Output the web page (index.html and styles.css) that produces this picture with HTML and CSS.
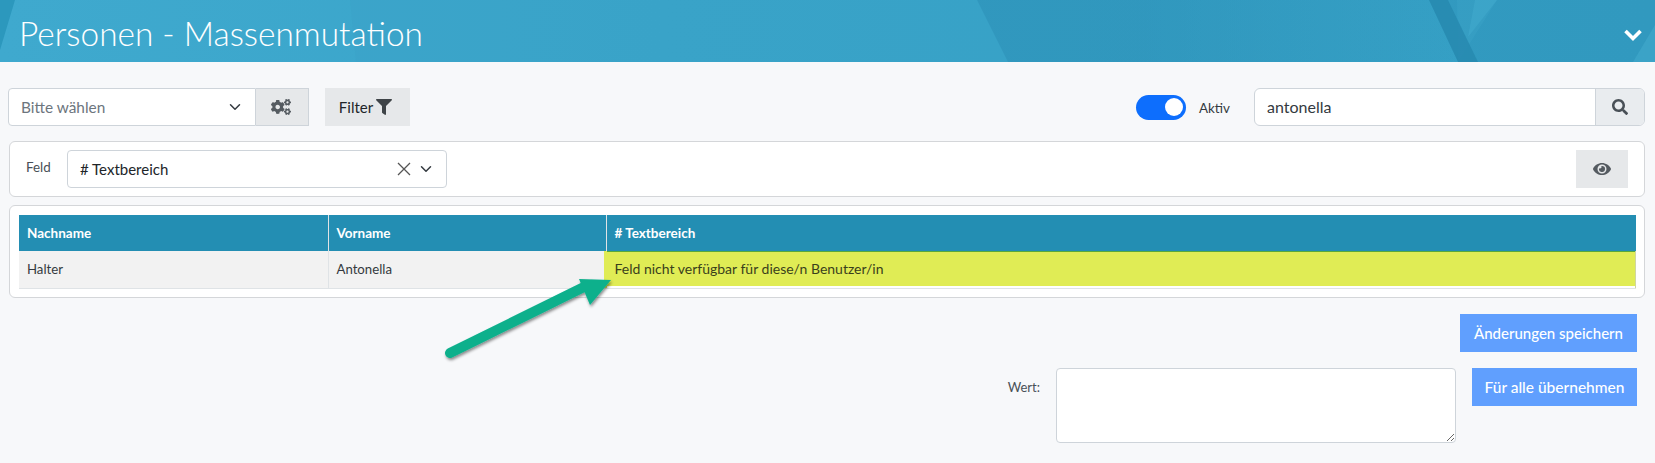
FILE: index.html
```html
<!DOCTYPE html>
<html lang="de">
<head>
<meta charset="utf-8">
<title>Personen - Massenmutation</title>
<link rel="stylesheet" href="styles.css">
</head>
<body>
<header class="hero">
  <svg class="hero-bg" viewBox="0 0 1655 62" preserveAspectRatio="none" aria-hidden="true">
    <defs>
      <linearGradient id="fade-dark" x1="0" x2="1" y1="0" y2="0">
        <stop offset="0" stop-color="#2789b1" stop-opacity=".42"/>
        <stop offset=".35" stop-color="#2789b1" stop-opacity=".4"/>
        <stop offset="1" stop-color="#2789b1" stop-opacity=".05"/>
      </linearGradient>
    </defs>
    <polygon points="0,0 15,0 0,50" fill="#2c98bd"/>
    <polygon points="350,0 1655,0 1655,62 356,62" fill="#2f8fb8" fill-opacity=".08"/>
    <polygon points="977,0 1429,0 1458,62 1008,62" fill="url(#fade-dark)"/>
    <polygon points="1448,0 1655,0 1655,62 1478,62" fill="#2789b1" fill-opacity=".28"/>
    <polygon points="1457,0 1497,0 1458,62" fill="#45add0" fill-opacity=".2"/>
    <polygon points="1475,0 1497,0 1468,37" fill="#45add0" fill-opacity=".45"/>
    <polygon points="1429,0 1448,0 1478,62 1458,62" fill="#2283ab" fill-opacity=".72"/>
    <polygon points="1655,25 1655,62 1633,62" fill="#45add0" fill-opacity=".5"/>
  </svg>
  <h1 class="hero-title">Personen - Massenmutation</h1>
  <svg class="hero-chevron" viewBox="0 0 20 14" aria-hidden="true"><path d="M2.5 3 10 10.5 17.5 3" fill="none" stroke="#fff" stroke-width="3.6"/></svg>
</header>

<main class="page">
  <div class="toolbar">
    <div class="group">
      <div class="select select-main"><span class="placeholder">Bitte wählen</span><svg class="caret" viewBox="0 0 16 16"><path d="M2 5l6 6 6-6" fill="none" stroke="#343a40" stroke-width="2" stroke-linecap="round" stroke-linejoin="round"/></svg></div>
      <button class="addon addon-cogs" type="button"><svg class="icon-cogs" viewBox="0 0 640 512"><path d="M512.1 191l-8.2 14.3c-3 5.3-9.4 7.5-15.1 5.4-11.8-4.4-22.6-10.7-32.1-18.6-4.6-3.8-5.8-10.5-2.8-15.7l8.2-14.3c-6.9-8-12.3-17.3-15.9-27.4h-16.5c-6 0-11.2-4.3-12.2-10.3-2-12-2.1-24.6 0-37.1 1-6 6.2-10.4 12.2-10.4h16.5c3.6-10.1 9-19.4 15.9-27.4l-8.2-14.3c-3-5.2-1.9-11.9 2.8-15.7 9.5-7.9 20.4-14.2 32.1-18.6 5.7-2.1 12.1.1 15.1 5.4l8.2 14.3c10.5-1.9 21.2-1.9 31.7 0L552 6.3c3-5.3 9.4-7.5 15.1-5.4 11.8 4.4 22.6 10.7 32.1 18.6 4.6 3.8 5.8 10.5 2.8 15.7l-8.2 14.3c6.9 8 12.3 17.3 15.9 27.4h16.5c6 0 11.2 4.3 12.2 10.3 2 12 2.1 24.6 0 37.1-1 6-6.2 10.4-12.2 10.4h-16.5c-3.6 10.1-9 19.4-15.9 27.4l8.2 14.3c3 5.2 1.9 11.9-2.8 15.7-9.5 7.9-20.4 14.2-32.1 18.6-5.7 2.1-12.1-.1-15.1-5.4l-8.2-14.3c-10.4 1.9-21.2 1.9-31.7 0zm-10.5-58.8c38.5 29.6 82.4-14.3 52.8-52.8-38.5-29.7-82.4 14.3-52.8 52.8zM386.3 286.1l33.7 16.8c10.1 5.8 14.5 18.1 10.5 29.1-8.9 24.2-26.4 46.4-42.6 65.8-7.4 8.9-20.2 11.1-30.3 5.3l-29.1-16.8c-16 13.7-34.6 24.6-54.9 31.7v33.6c0 11.6-8.3 21.6-19.7 23.6-24.6 4.2-50.4 4.4-75.9 0-11.5-2-20-11.9-20-23.6V418c-20.3-7.2-38.9-18-54.9-31.7L74 403c-10 5.8-22.9 3.6-30.3-5.3-16.2-19.4-33.3-41.6-42.2-65.7-4-10.9.4-23.2 10.5-29.1l33.3-16.8c-3.9-20.9-3.9-42.4 0-63.4L12 205.8c-10.1-5.8-14.6-18.1-10.5-29 8.9-24.2 26-46.4 42.2-65.8 7.4-8.9 20.2-11.1 30.3-5.3l29.1 16.8c16-13.7 34.6-24.6 54.9-31.7V57.1c0-11.5 8.2-21.5 19.6-23.5 24.6-4.2 50.5-4.4 76-.1 11.5 2 20 11.9 20 23.6v33.6c20.3 7.2 38.9 18 54.9 31.7l29.1-16.8c10-5.8 22.9-3.6 30.3 5.3 16.2 19.4 33.2 41.6 42.1 65.8 4 10.9.1 23.2-10 29.1l-33.7 16.8c3.9 21 3.9 42.5 0 63.5zm-117.6 21.1c59.2-77-28.7-164.9-105.7-105.7-59.2 77 28.7 164.9 105.7 105.7zm243.4 182.7l-8.2 14.3c-3 5.3-9.4 7.5-15.1 5.4-11.8-4.4-22.6-10.7-32.1-18.6-4.6-3.8-5.8-10.5-2.8-15.7l8.2-14.3c-6.9-8-12.3-17.3-15.9-27.4h-16.5c-6 0-11.2-4.3-12.2-10.3-2-12-2.1-24.6 0-37.1 1-6 6.2-10.4 12.2-10.4h16.5c3.6-10.1 9-19.4 15.9-27.4l-8.2-14.3c-3-5.2-1.9-11.9 2.8-15.7 9.5-7.9 20.4-14.2 32.1-18.6 5.7-2.1 12.1.1 15.1 5.4l8.2 14.3c10.5-1.9 21.2-1.9 31.7 0l8.2-14.3c3-5.3 9.4-7.5 15.1-5.4 11.8 4.4 22.6 10.7 32.1 18.6 4.6 3.8 5.8 10.5 2.8 15.7l-8.2 14.3c6.9 8 12.3 17.3 15.9 27.4h16.5c6 0 11.2 4.3 12.2 10.3 2 12 2.1 24.6 0 37.1-1 6-6.2 10.4-12.2 10.4h-16.5c-3.6 10.1-9 19.4-15.9 27.4l8.2 14.3c3 5.2 1.9 11.9-2.8 15.7-9.5 7.9-20.4 14.2-32.1 18.6-5.7 2.1-12.1-.1-15.1-5.4l-8.2-14.3c-10.4 1.9-21.2 1.9-31.7 0zM501.6 431c38.5 29.6 82.4-14.3 52.8-52.8-38.5-29.6-82.4 14.3-52.8 52.8z"/></svg></button>
      <button class="btn-filter" type="button">Filter<svg class="icon-filter" viewBox="0 0 512 512"><path d="M487.976 0H24.028C2.71 0-8.047 25.866 7.058 40.971L192 225.941V432c0 7.831 3.821 15.17 10.237 19.662l80 55.98C298.02 518.69 320 507.493 320 487.98V225.941l184.947-184.97C520.021 25.896 509.338 0 487.976 0z"/></svg></button>
    </div>
    <div class="group group-right">
      <span class="switch"><span class="switch-knob"></span></span>
      <span class="switch-label">Aktiv</span>
      <div class="search">
        <span class="search-value">antonella</span>
        <button class="search-btn" type="button"><svg class="icon-search" viewBox="0 0 512 512"><path d="M505 442.7L405.3 343c-4.5-4.5-10.6-7-17-7H372c27.6-35.3 44-79.7 44-128C416 93.1 322.9 0 208 0S0 93.1 0 208s93.1 208 208 208c48.3 0 92.7-16.4 128-44v16.3c0 6.4 2.5 12.5 7 17l99.7 99.7c9.4 9.4 24.6 9.4 33.9 0l28.3-28.3c9.4-9.4 9.4-24.6.1-34zM208 336c-70.7 0-128-57.2-128-128 0-70.7 57.2-128 128-128 70.7 0 128 57.2 128 128 0 70.7-57.2 128-128 128z"/></svg></button>
      </div>
    </div>
  </div>

  <section class="card card-field">
    <span class="field-label">Feld</span>
    <div class="select select-field"><span class="field-value"># Textbereich</span>
      <svg class="clear" viewBox="0 0 14 14"><path d="M1 1l12 12M13 1L1 13" fill="none" stroke="#555" stroke-width="1.3"/></svg>
      <svg class="caret" viewBox="0 0 16 16"><path d="M2 5l6 6 6-6" fill="none" stroke="#343a40" stroke-width="2" stroke-linecap="round" stroke-linejoin="round"/></svg>
    </div>
    <button class="btn-eye" type="button"><svg class="icon-eye" viewBox="0 0 576 512"><path d="M572.52 241.4C518.29 135.59 410.93 64 288 64S57.68 135.64 3.48 241.41a32.35 32.35 0 0 0 0 29.19C57.71 376.41 165.07 448 288 448s230.32-71.64 284.52-177.41a32.35 32.35 0 0 0 0-29.19zM288 400a144 144 0 1 1 144-144 143.93 143.93 0 0 1-144 144zm0-240a95.31 95.31 0 0 0-25.31 3.79 47.85 47.85 0 0 1-66.9 66.9A95.78 95.78 0 1 0 288 160z"/></svg></button>
  </section>

  <section class="card card-table">
    <table class="grid">
      <colgroup><col class="col-a"><col class="col-b"><col></colgroup>
      <thead><tr><th>Nachname</th><th>Vorname</th><th># Textbereich</th></tr></thead>
      <tbody><tr><td>Halter</td><td>Antonella</td><td class="cell-na">Feld nicht verfügbar für diese/n Benutzer/in</td></tr></tbody>
    </table>
  </section>

  <div class="actions">
    <button class="btn-primary btn-save" type="button">Änderungen speichern</button>
  </div>
  <div class="bulk">
    <label class="bulk-label" for="wert">Wert:</label>
    <textarea class="bulk-input" id="wert"></textarea>
    <button class="btn-primary btn-apply" type="button">Für alle übernehmen</button>
  </div>
</main>

<svg class="arrow" viewBox="0 0 1655 463" aria-hidden="true">
  <defs><filter id="arrow-shadow" x="-20%" y="-20%" width="140%" height="140%"><feDropShadow dx="1" dy="2" stdDeviation="1.5" flood-color="#000" flood-opacity=".45"/></filter></defs>
  <g filter="url(#arrow-shadow)">
    <path d="M450 353 588 285" stroke="#0bb08c" stroke-width="10" stroke-linecap="round" fill="none"/>
    <polygon points="611,280 579,279 590,305" fill="#0bb08c"/>
  </g>
</svg>
</body>
</html>
```
FILE: styles.css
```css
* { box-sizing: border-box; }
html, body { margin: 0; padding: 0; }
body {
  width: 1655px;
  height: 463px;
  overflow: hidden;
  position: relative;
  background: #f7f8fa;
  color: #212529;
  font-family: "Lato", "Open Sans", sans-serif;
  font-size: 15px;
}
button { font-family: inherit; border: 0; padding: 0; }

.hero {
  position: relative;
  height: 62px;
  background: linear-gradient(90deg, #3fa9ce 0%, #3aa5ca 40%, #36a2c7 100%);
  overflow: hidden;
}
.hero-bg { position: absolute; inset: 0; width: 100%; height: 100%; }
.hero-title {
  position: relative;
  margin: 0;
  padding: 10px 0 0 19px;
  font-size: 33.4px;
  line-height: 46px;
  font-weight: 300;
  color: #fff;
}
.hero-chevron { position: absolute; right: 12px; top: 28px; width: 20px; height: 14px; }

.page { padding: 26px 10px 0 8px; }
.toolbar { display: flex; justify-content: space-between; height: 38px; }
.group { display: flex; align-items: center; }
.select {
  display: flex;
  align-items: center;
  height: 38px;
  background: #fff;
  border: 1px solid #ced4da;
  border-radius: 4px;
}
.select-main { width: 248px; padding: 0 14px 0 12px; border-radius: 4px 0 0 4px; justify-content: space-between; font-size: 15.4px; }
.placeholder { color: #6c757d; }
.caret { width: 12px; height: 12px; flex: none; }
.addon {
  display: flex;
  align-items: center;
  justify-content: center;
  height: 38px;
  width: 53px;
  padding-right: 2px;
  background: #e6e8ea;
  border: 1px solid #ced4da;
  border-left: 0;
}
.icon-cogs { width: 20px; height: 16px; fill: #555b61; }
.btn-filter {
  display: flex;
  align-items: center;
  justify-content: center;
  gap: 3px;
  margin-left: 16px;
  width: 85px;
  height: 38px;
  padding-right: 4px;
  background: #e6e8ea;
  color: #212529;
  font-size: 15px;
}
.icon-filter { width: 16px; height: 16px; fill: #3f4448; }
.switch {
  position: relative;
  width: 50px;
  height: 25px;
  border-radius: 13px;
  background: #0d6efd;
}
.switch-knob {
  position: absolute;
  top: 3.5px;
  right: 3px;
  width: 18px;
  height: 18px;
  border-radius: 50%;
  background: #fff;
}
.switch-label { margin: 2px 23px 0 13px; width: 32px; font-size: 13.4px; color: #343a40; }
.search {
  display: flex;
  width: 391px;
  height: 38px;
  background: #fff;
  border: 1px solid #ced4da;
  border-radius: 6px;
  overflow: hidden;
}
.search-value { flex: 1; padding-left: 12px; line-height: 36px; font-size: 16px; color: #343a40; }
.search-btn {
  display: flex;
  align-items: center;
  justify-content: center;
  width: 49px;
  background: #e9ecef;
  border-left: 1px solid #ced4da;
}
.icon-search { width: 16px; height: 16px; fill: #495057; }

.card {
  background: #fff;
  border: 1px solid #d4d6d9;
  border-radius: 6px;
  margin-left: 1px;
}
.card-field {
  display: flex;
  align-items: center;
  height: 56px;
  margin-top: 15px;
  padding: 0 16px 0 16px;
}
.field-label { width: 41px; font-size: 13.4px; color: #495057; margin-top: -5px; }
.select-field { width: 380px; padding: 0 14px 0 12px; }
.field-value { flex: 1; color: #212529; }
.clear { width: 14px; height: 14px; margin-right: 9px; }
.btn-eye {
  display: flex;
  align-items: center;
  justify-content: center;
  margin-left: auto;
  width: 52px;
  height: 38px;
  padding-right: 1px;
  background: #e6e8ea;
}
.icon-eye { width: 18px; height: 16px; fill: #555b61; }

.card-table { height: 93px; margin-top: 8px; padding: 9px 8px 0 9px; }
.grid { width: 100%; border-collapse: collapse; table-layout: fixed; font-size: 13.2px; }
.col-a { width: 309px; }
.col-b { width: 278px; }
.grid th {
  height: 36px;
  padding: 0 8px;
  text-align: left;
  font-size: 13.5px;
  font-weight: 700;
  color: #fff;
  background: #238eb3;
  border-left: 1px solid #dfe3e6;
}
.grid th:first-child, .grid td:first-child { border-left: 0; }
.grid td {
  height: 37px;
  padding: 0 8px;
  background: #f2f2f2;
  border-left: 1px solid #dfe3e6;
  border-bottom: 1px solid #dfe3e6;
  color: #343a40;
}
.grid td.cell-na {
  padding-bottom: 2px;
  font-size: 14px;
  background: linear-gradient(#e0ec55, #e0ec55) no-repeat top / 100% 35px;
  box-shadow: inset 0 1px 0 #5aa83c, -2px 0 0 #e0ec55;
  color: #3a3f1c;
  border-left-color: #e0ec55;
  border-right: 1px solid #d0d6a0;
}

.actions { display: flex; justify-content: flex-end; margin-top: 16px; padding-right: 8px; }
.btn-primary {
  height: 38px;
  background: #609ffe;
  color: #fff;
  font-weight: 500;
  white-space: nowrap;
}
.btn-save { width: 177px; font-size: 15px; }
.btn-apply { width: 165px; font-size: 15.5px; }
.bulk { display: flex; align-items: flex-start; margin-top: 16px; padding-right: 8px; justify-content: flex-end; }
.bulk-label { font-size: 13px; color: #495057; margin: 11px 16px 0 0; }
.bulk-input {
  display: block;
  width: 400px;
  height: 75px;
  margin: 0 16px 0 0;
  background: #fff;
  border: 1px solid #ced4da;
  border-radius: 4px;
  resize: both;
}

.arrow { position: absolute; left: 0; top: 0; width: 1655px; height: 463px; pointer-events: none; }
```
